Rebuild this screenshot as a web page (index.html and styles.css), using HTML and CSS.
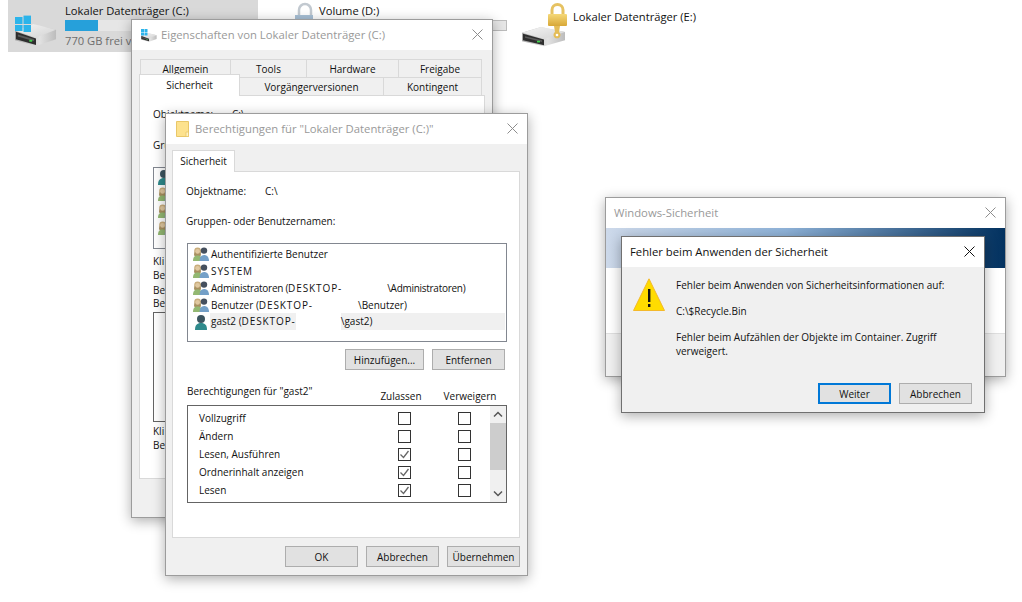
FILE: index.html
```html
<!DOCTYPE html>
<html lang="de">
<head>
<meta charset="utf-8">
<title>Fehler beim Anwenden der Sicherheit</title>
<link rel="stylesheet" href="styles.css">
</head>
<body>
<svg class="defs" width="0" height="0" aria-hidden="true">
  <defs>
    <linearGradient id="gTop" x1="0" y1="0" x2="1" y2="1"><stop offset="0" stop-color="#f4f4f4"/><stop offset="1" stop-color="#d4d4d4"/></linearGradient>
    <linearGradient id="gSide" x1="0" y1="0" x2="1" y2="0"><stop offset="0" stop-color="#a8a8a8"/><stop offset=".6" stop-color="#e2e2e2"/><stop offset="1" stop-color="#bcbcbc"/></linearGradient>
    <linearGradient id="gLock" x1="0" y1="0" x2="0" y2="1"><stop offset="0" stop-color="#f5d878"/><stop offset="1" stop-color="#d8a838"/></linearGradient>
    <symbol id="drive" viewBox="0 0 44 24" preserveAspectRatio="none">
      <polygon points="0,7 19,0 43,6 43,16 22,23 0,17" fill="url(#gSide)"/>
      <polygon points="0,7 19,0 43,6 22,14" fill="url(#gTop)"/>
      <polygon points="1,8 22,15 22,22 1,16" fill="#2e2e2e"/>
      <polygon points="3,11 20,16 20,18 3,13" fill="#5a5a5a"/>
      <rect x="15" y="16.5" width="3" height="2" fill="#3fd34c"/>
    </symbol>
    <symbol id="group" viewBox="0 0 16 16">
      <circle cx="4.600" cy="5" r="3.400" fill="#c9ad7c"/>
      <path d="M2 5.500c-1.500 2-1 4-.5 4.500h6c.5-.5 1-2.500-.5-4.500z" fill="#a89060"/>
      <circle cx="4.600" cy="5.400" r="2.400" fill="#e0c8a0"/>
      <path d="M0 15c0-4 1.600-5.600 4.600-5.600S9 11 9 15z" fill="#93b872"/>
      <circle cx="11" cy="4.600" r="3.200" fill="#45505e"/>
      <path d="M6.600 15c0-4 1.400-6 4.400-6s5 2 5 6z" fill="#74a0c8"/>
    </symbol>
    <symbol id="user" viewBox="0 0 12 16">
      <circle cx="6" cy="5" r="4" fill="#3c5560"/>
      <path d="M0 16c0-5 2-7 6-7s6 2 6 7z" fill="#2f8a8c"/>
    </symbol>
    <symbol id="xmark" viewBox="0 0 11 11">
      <path d="M.5.5l10 10M10.500.5l-10 10" fill="none" stroke="currentColor" stroke-width="1"/>
    </symbol>
  </defs>
</svg>

<main class="desktop">
  <section class="drives">
    <article class="drive drive-selected">
      <svg class="drive-icon" viewBox="0 0 48 50" aria-hidden="true">
        <use href="#drive" x="1" y="24" width="42" height="23"/>
        <g fill="#2cb4ea"><rect x="1" y="17" width="7.500" height="7"/><rect x="9.500" y="15.600" width="7.500" height="8.400"/><rect x="1" y="25" width="7.500" height="6"/><rect x="9.500" y="25" width="7.500" height="7"/></g>
      </svg>
      <div class="drive-info">
        <span class="drive-name">Lokaler Datenträger (C:)</span>
        <span class="bar"><span class="bar-fill"></span></span>
        <span class="drive-free">770 GB frei v</span>
      </div>
    </article>
    <article class="drive">
      <svg class="drive-icon" viewBox="0 0 48 50" aria-hidden="true">
        <path d="M31 17v-7a6 6 0 0 1 12 0v7" fill="none" stroke="#c2c9d0" stroke-width="2.500"/>
        <rect x="27" y="15" width="18" height="5" fill="#a8c0d6"/>
      </svg>
      <div class="drive-info">
        <span class="drive-name">Volume (D:)</span>
        <span class="bar"></span>
      </div>
    </article>
    <article class="drive drive-plain">
      <svg class="drive-icon" viewBox="0 0 48 50" aria-hidden="true">
        <use href="#drive" x="0" y="27" width="44" height="20"/>
        <path d="M30 16V10a5.500 5.500 0 0 1 11 0v6" fill="none" stroke="#e6c262" stroke-width="3"/>
        <rect x="26" y="14" width="19" height="12" rx="1" fill="url(#gLock)"/>
        <path d="M32 26h6l-1 6a3.500 3.500 0 1 1-4 0z" fill="#e4bd58"/>
        <circle cx="35" cy="35" r="1.300" fill="#fff"/>
      </svg>
      <div class="drive-info">
        <span class="drive-name">Lokaler Datenträger (E:)</span>
      </div>
    </article>
  </section>

  <section class="win win-props">
    <header class="titlebar">
      <svg class="title-icon" viewBox="0 0 16 13" aria-hidden="true">
        <use href="#drive" x="0" y="4" width="16" height="9"/>
        <g fill="#2cb4ea"><rect x="0" y="0" width="3" height="3"/><rect x="3.500" y="0" width="3" height="3"/><rect x="0" y="3.500" width="3" height="3"/><rect x="3.500" y="3.500" width="3" height="3"/></g>
      </svg>
      <h2 class="title">Eigenschaften von Lokaler Datenträger (C:)</h2>
      <span class="close"><svg class="x-icon"><use href="#xmark"/></svg></span>
    </header>
    <div class="props-body">
      <div class="tab-row tab-row-1">
        <span class="tab tw-all">Allgemein</span><span class="tab tw-tools">Tools</span><span class="tab tw-hw">Hardware</span><span class="tab tw-share">Freigabe</span>
      </div>
      <div class="tab-row tab-row-2">
        <span class="tab tab-active tw-sec">Sicherheit</span><span class="tab tw-prev">Vorgängerversionen</span><span class="tab tw-quota">Kontingent</span>
      </div>
      <div class="props-panel">
        <p class="label props-obj"><span class="obj-key-back">Objektname:</span><span>C:\</span></p>
        <p class="label props-grp">Gru</p>
        <div class="back-list">
          <svg class="back-ico" viewBox="0 0 16 16"><use href="#user" width="12" height="16"/></svg>
          <svg class="back-ico" viewBox="0 0 16 16"><use href="#group"/></svg>
          <svg class="back-ico" viewBox="0 0 16 16"><use href="#group"/></svg>
          <svg class="back-ico" viewBox="0 0 16 16"><use href="#group"/></svg>
        </div>
        <p class="label back-text-1">Kli</p>
        <p class="label">Be</p>
        <p class="label back-text-3">Be</p>
        <p class="label back-text-4">Be</p>
        <div class="back-box"></div>
        <p class="label back-text-5">Kli</p>
        <p class="label">Be</p>
      </div>
    </div>
  </section>

  <section class="win win-perm">
    <header class="titlebar">
      <svg class="title-icon-folder" viewBox="0 0 13 16" aria-hidden="true">
        <path d="M.5.5h12v15H.5z" fill="#fde28e" stroke="#e9c768"/>
        <path d="M10 11h2.500v4.500H10z" fill="#fff3c4" stroke="#e9c768" stroke-width=".8"/>
      </svg>
      <h2 class="title">Berechtigungen für "Lokaler Datenträger (C:)"</h2>
      <span class="close"><svg class="x-icon"><use href="#xmark"/></svg></span>
    </header>
    <div class="perm-body">
      <div class="perm-tabs"><span class="tab tab-active tw-single">Sicherheit</span></div>
      <div class="perm-panel">
        <p class="label obj-row"><span class="obj-key">Objektname:</span><span>C:\</span></p>
        <p class="label grp-row">Gruppen- oder Benutzernamen:</p>
        <ul class="user-list">
          <li class="user"><svg class="ico" viewBox="0 0 16 16"><use href="#group"/></svg>Authentifizierte Benutzer</li>
          <li class="user"><svg class="ico" viewBox="0 0 16 16"><use href="#group"/></svg><span class="caps">SYSTEM</span></li>
          <li class="user"><svg class="ico" viewBox="0 0 16 16"><use href="#group"/></svg><span class="tight">Administratoren (</span><span class="caps">DESKTOP-</span><span class="redact"></span><span class="tight">\Administratoren)</span></li>
          <li class="user"><svg class="ico" viewBox="0 0 16 16"><use href="#group"/></svg>Benutzer (<span class="caps">DESKTOP-</span><span class="redact"></span>\Benutzer)</li>
          <li class="user user-selected"><svg class="ico ico-user" viewBox="0 0 12 16"><use href="#user"/></svg><span class="user-sel-text">gast2 (<span class="caps">DESKTOP-</span><span class="redact redact-white"></span>\gast2)</span></li>
        </ul>
        <div class="list-actions">
          <button class="btn btn-add">Hinzufügen...</button>
          <button class="btn">Entfernen</button>
        </div>
        <div class="perm-head">
          <span class="perm-for">Berechtigungen für "gast2"</span>
          <span class="perm-col">Zulassen</span>
          <span class="perm-col perm-col-2">Verweigern</span>
        </div>
        <div class="perm-box">
          <div class="perm-rows">
            <div class="perm-row"><span class="perm-name">Vollzugriff</span><span class="check"></span><span class="check"></span></div>
            <div class="perm-row"><span class="perm-name">Ändern</span><span class="check"></span><span class="check"></span></div>
            <div class="perm-row"><span class="perm-name">Lesen, Ausführen</span><span class="check check-on"><svg class="tick" viewBox="0 0 11 11"><path d="M1.500 5.500l3 3 5-6.500" fill="none" stroke="#666" stroke-width="1.300"/></svg></span><span class="check"></span></div>
            <div class="perm-row"><span class="perm-name">Ordnerinhalt anzeigen</span><span class="check check-on"><svg class="tick" viewBox="0 0 11 11"><path d="M1.500 5.500l3 3 5-6.500" fill="none" stroke="#666" stroke-width="1.300"/></svg></span><span class="check"></span></div>
            <div class="perm-row"><span class="perm-name">Lesen</span><span class="check check-on"><svg class="tick" viewBox="0 0 11 11"><path d="M1.500 5.500l3 3 5-6.500" fill="none" stroke="#666" stroke-width="1.300"/></svg></span><span class="check"></span></div>
            <div class="perm-row"><span class="perm-name"></span><span class="check"></span><span class="check"></span></div>
          </div>
          <div class="scrollbar">
            <svg class="arrow" viewBox="0 0 16 17"><path d="M4 10.500l4-4 4 4" fill="none" stroke="#555" stroke-width="1.500"/></svg>
            <span class="thumb"></span>
            <svg class="arrow arrow-down" viewBox="0 0 16 17"><path d="M4 6.500l4 4 4-4" fill="none" stroke="#555" stroke-width="1.500"/></svg>
          </div>
        </div>
      </div>
      <div class="footer-btns">
        <button class="btn">OK</button>
        <button class="btn">Abbrechen</button>
        <button class="btn">Übernehmen</button>
      </div>
    </div>
  </section>

  <section class="win win-sec">
    <header class="titlebar titlebar-sec">
      <h2 class="title">Windows-Sicherheit</h2>
      <span class="close"><svg class="x-icon"><use href="#xmark"/></svg></span>
    </header>
    <div class="sec-band"></div>
    <div class="sec-white"></div>
    <div class="sec-foot"></div>
  </section>

  <section class="win win-err">
    <header class="titlebar titlebar-err">
      <h2 class="title title-active">Fehler beim Anwenden der Sicherheit</h2>
      <span class="close close-active"><svg class="x-icon"><use href="#xmark"/></svg></span>
    </header>
    <div class="err-body">
      <div class="err-main">
        <svg class="warn" viewBox="0 0 32 33" aria-hidden="true">
          <path d="M16 .8L31.500 32.500H.5z" fill="#ffdc00" stroke="#f4b92a"/>
          <rect x="15" y="11" width="2.400" height="13" fill="#111"/>
          <rect x="15" y="26" width="2.400" height="3" fill="#111"/>
        </svg>
        <div class="err-text">
          <p class="label err-p">Fehler beim Anwenden von Sicherheitsinformationen auf:</p>
          <p class="label err-p">C:\$Recycle.Bin</p>
          <p class="label err-last">Fehler beim Aufzählen der Objekte im Container. Zugriff verweigert.</p>
        </div>
      </div>
      <div class="err-btns">
        <button class="btn btn-default">Weiter</button>
        <button class="btn">Abbrechen</button>
      </div>
    </div>
  </section>
</main>
</body>
</html>
```
FILE: styles.css
```css
* { box-sizing: border-box; }
html, body { margin: 0; padding: 0; }
body {
  width: 1022px;
  height: 602px;
  overflow: hidden;
  background: #fff;
  color: #111;
  font-family: "Open Sans", "Noto Sans", sans-serif;
  font-size: 10px;
  line-height: 14px;
}
p, h2, ul { margin: 0; padding: 0; }
ul { list-style: none; }
.defs { position: absolute; }
.desktop { position: relative; width: 1022px; height: 602px; overflow: hidden; }

/* drive tiles */
.drives { display: flex; gap: 4px; padding-left: 8px; }
.drive { display: flex; width: 250px; height: 52px; padding-left: 6px; }
.drive-selected { background: #d9d9d9; }
.drive-icon { width: 48px; height: 50px; flex: none; }
.drive-info { display: flex; flex-direction: column; margin-left: 3px; padding-top: 3px; flex: 1; }
.drive-name { font-size: 11.200px; line-height: 15px; color: #111; }
.drive-plain .drive-info { padding-top: 9px; }
.bar { display: block; height: 11px; width: 188px; margin-top: 2px; background: #e6e6e6; border: 1px solid #bcbcbc; }
.drive-selected .bar { border: 0; }
.bar-fill { display: block; width: 33px; height: 100%; background: #26a0da; }
.drive-free { margin-top: 2px; font-size: 11.200px; line-height: 15px; color: #6d6d6d; white-space: nowrap; }

/* windows */
.win {
  position: absolute;
  display: flex;
  flex-direction: column;
  background: #f0f0f0;
  border: 1px solid #9c9c9c;
  box-shadow: 0 3px 12px rgba(0, 0, 0, .32);
}
.win-props { left: 131px; top: 19px; width: 362px; height: 499px; }
.win-perm { left: 165px; top: 113px; width: 363px; height: 463px; }
.win-sec { left: 605px; top: 197px; width: 401px; height: 180px; background: #fff; }
.win-err { left: 621px; top: 236px; width: 364px; height: 177px; border-color: #707070; }

.titlebar { display: flex; align-items: center; height: 30px; flex: none; background: #fff; padding-left: 9px; }
.title { font-weight: 400; font-size: 11.300px; color: #999; white-space: nowrap; flex: 1; }
.title-active { color: #111; }
.close { display: flex; justify-content: center; width: 29px; flex: none; margin-bottom: 2px; color: #8d8d8d; }
.close-active { color: #111; }
.x-icon { width: 11px; height: 11px; display: block; }
.titlebar-err { padding-left: 8px; }
.title-icon { width: 16px; height: 13px; margin-right: 4px; flex: none; }
.title-icon-folder { width: 13px; height: 16px; margin: 0 6px 0 1px; flex: none; }

/* tabs */
.tab {
  display: block;
  height: 18px;
  line-height: 19px;
  text-align: center;
  background: #f0f0f0;
  border: 1px solid #d9d9d9;
  border-bottom: 0;
  margin-right: -1px;
  color: #111;
}
.tab-row { display: flex; align-items: flex-end; height: 18px; }
.tab-row-1 { margin: 9px 0 0 8px; }
.tab-row-2 { margin-left: 7px; }
.tab-active {
  position: relative;
  z-index: 1;
  height: 22px;
  line-height: 20px;
  background: #fff;
  margin-bottom: -1px;
}
.tw-all { width: 91px; }
.tw-tools { width: 77px; }
.tw-hw { width: 93px; }
.tw-share { width: 84px; }
.tw-sec { width: 101px; }
.tw-prev { width: 145px; }
.tw-quota { width: 99px; }
.tw-single { width: 63px; }

.props-body { flex: 1; }
.props-panel {
  margin-left: 7px;
  width: 346px;
  height: 384px;
  background: #fff;
  border: 1px solid #d9d9d9;
  padding: 11px 0 0 13px;
  overflow: hidden;
}
.label { white-space: nowrap; }
.props-obj { display: flex; }
.obj-key-back { width: 79px; }
.props-grp { margin-top: 17px; }
.back-list {
  display: flex;
  flex-direction: column;
  gap: 1px;
  width: 320px;
  height: 82px;
  margin-top: 15px;
  padding: 1px 0 0 4px;
  border: 1px solid #828790;
}
.back-ico { width: 16px; height: 16px; display: block; flex: none; }
.back-text-1 { margin-top: 5px; }
.back-text-3 { margin-top: 1px; }
.back-text-4 { margin-top: -1px; }
.back-box { width: 320px; height: 110px; margin-top: 2px; border: 1px solid #646464; }
.back-text-5 { margin-top: 2px; }

.perm-body { flex: 1; display: flex; flex-direction: column; padding-left: 6px; }
.perm-tabs { display: flex; height: 27px; align-items: flex-end; }
.perm-panel {
  width: 348px;
  height: 367px;
  background: #fff;
  border: 1px solid #d9d9d9;
  padding: 12px 0 0 14px;
}
.obj-row { display: flex; margin-left: -1px; }
.obj-key { width: 79px; }
.grp-row { margin: 16px 0 0 -1px; }
.user-list {
  width: 320px;
  height: 99px;
  margin-top: 15px;
  padding: 1px 1px 0 0;
  border: 1px solid #828790;
}
.user { display: flex; align-items: center; height: 17px; padding-left: 5px; white-space: pre; color: #111; }
.ico { width: 16px; height: 16px; margin-right: 2px; flex: none; }
.ico-user { width: 12px; height: 16px; margin: 0 3px 0 2px; }
.user-sel-text { flex: 1; background: #f0f0f0; line-height: 17px; padding-left: 1px; }
.caps { letter-spacing: .9px; }
.tight { letter-spacing: -.28px; }
.redact { display: inline-block; width: 45px; height: 17px; vertical-align: top; }
.redact-white { background: #fff; }
.list-actions { display: flex; justify-content: flex-end; gap: 8px; width: 318px; margin-top: 7px; }
.btn {
  width: 73px;
  height: 21px;
  padding: 0;
  background: #e1e1e1;
  border: 1px solid #adadad;
  font: inherit;
  color: #111;
  white-space: nowrap;
}
.btn-add { width: 79px; }
.perm-head { display: flex; align-items: flex-end; height: 35px; width: 320px; }
.perm-for { width: 184px; padding-bottom: 7px; }
.perm-col { width: 60px; text-align: center; padding-bottom: 2px; }
.perm-col-2 { margin-left: 9px; }
.perm-box {
  display: flex;
  width: 320px;
  height: 98px;
  border: 1px solid #646464;
  overflow: hidden;
}
.perm-rows { width: 302px; flex: none; padding-top: 3px; overflow: hidden; }
.perm-row { display: flex; align-items: center; height: 18px; padding-left: 11px; }
.perm-name { width: 199px; flex: none; white-space: nowrap; }
.check {
  display: block;
  width: 13px;
  height: 13px;
  margin-right: 47px;
  flex: none;
  border: 1px solid #333;
  background: #fff;
}
.tick { display: block; width: 11px; height: 11px; }
.scrollbar { display: flex; flex-direction: column; width: 16px; flex: none; background: #f0f0f0; }
.arrow { width: 16px; height: 17px; flex: none; display: block; }
.thumb { display: block; height: 47px; background: #cdcdcd; flex: none; }
.arrow-down { margin-top: auto; }
.footer-btns { display: flex; justify-content: flex-end; gap: 8px; margin-top: 8px; padding-right: 7px; }

/* background security window */
.titlebar-sec { padding-left: 8px; }
.sec-band { height: 40px; flex: none; background: linear-gradient(90deg, #cdd9ea 0%, #8fb3d9 45%, #02315f 100%); }
.sec-white { height: 65px; flex: none; background: #fff; }
.sec-foot { flex: 1; background: #f0f0f0; border-top: 1px solid #dfdfdf; }

/* error dialog */
.err-body { flex: 1; display: flex; flex-direction: column; padding: 11px 12px 0 11px; }
.err-main { display: flex; height: 105px; }
.warn { width: 32px; height: 33px; flex: none; margin-right: 11px; }
.err-p { margin-bottom: 12px; }
.err-last { width: 280px; white-space: normal; }
.err-btns { display: flex; justify-content: flex-end; gap: 8px; }
.btn-default { border: 2px solid #0078d7; }
```
